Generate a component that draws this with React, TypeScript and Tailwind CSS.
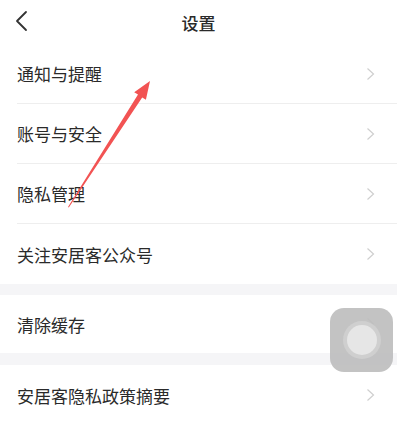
const groups: string[][] = [
  ["通知与提醒", "账号与安全", "隐私管理", "关注安居客公众号"],
  ["清除缓存"],
  ["安居客隐私政策摘要"],
];

function Arrow() {
  return (
    <svg
      className="absolute left-0 top-0 pointer-events-none"
      width="397"
      height="428"
      viewBox="0 0 397 428"
    >
      <polygon
        points="68,207 68.8,207.4 142.2,97.4 145.9,99.8 150,81 134.2,92.2 138,94.6"
        fill="#f25353"
      />
    </svg>
  );
}

function FloatingButton() {
  return (
    <div className="absolute left-[330px] top-[308px] w-[63px] h-[64px] rounded-[14px] bg-[#bdbdbd]/90 flex items-center justify-center">
      <div className="w-[38px] h-[38px] rounded-full bg-[#cfcfcf] flex items-center justify-center">
        <div className="w-[30px] h-[30px] rounded-full bg-[#e6e6e6]" />
      </div>
    </div>
  );
}

function RowChevron() {
  return (
    <svg width="9" height="14" viewBox="0 0 9 14" className="shrink-0">
      <path d="M1.5 1.5 L7.5 7 L1.5 12.5" fill="none" stroke="#cfcfcf" strokeWidth="1.2" />
    </svg>
  );
}

export default function App() {
  return (
    <div
      className="relative w-[397px] h-[428px] overflow-hidden bg-white text-[#2a2a2a]"
      style={{ fontFamily: '"Noto Sans CJK SC", "Noto Sans", sans-serif' }}
    >
      <header className="relative h-[44px] flex items-center justify-center">
        <svg
          className="absolute left-[12px] top-[10px]"
          width="18"
          height="22"
          viewBox="0 0 18 22"
        >
          <path d="M14 2 L5 11 L14 20" fill="none" stroke="#333" strokeWidth="1.8" strokeLinecap="round" strokeLinejoin="round" />
        </svg>
        <h1 className="text-[17px] leading-none font-medium">设置</h1>
      </header>

      {groups.map((items, gi) => (
        <section key={gi}>
          {gi > 0 && (
            <div className={(gi === 1 ? "h-[11px]" : "h-[12px]") + " bg-[#f5f5f7]"} />
          )}
          {items.map((label, i) => (
            <div key={label} className="pl-[17px]">
              <div
                className={
                  (gi === 1 ? "h-[58px]" : "h-[60px]") +
                  " flex items-center justify-between pr-[22px]" +
                  (i < items.length - 1 ? " border-b border-[#eeeeee]" : "")
                }
              >
                <span className="text-[17px] leading-none">{label}</span>
                <RowChevron />
              </div>
            </div>
          ))}
        </section>
      ))}

      <Arrow />
      <FloatingButton />
    </div>
  );
}
